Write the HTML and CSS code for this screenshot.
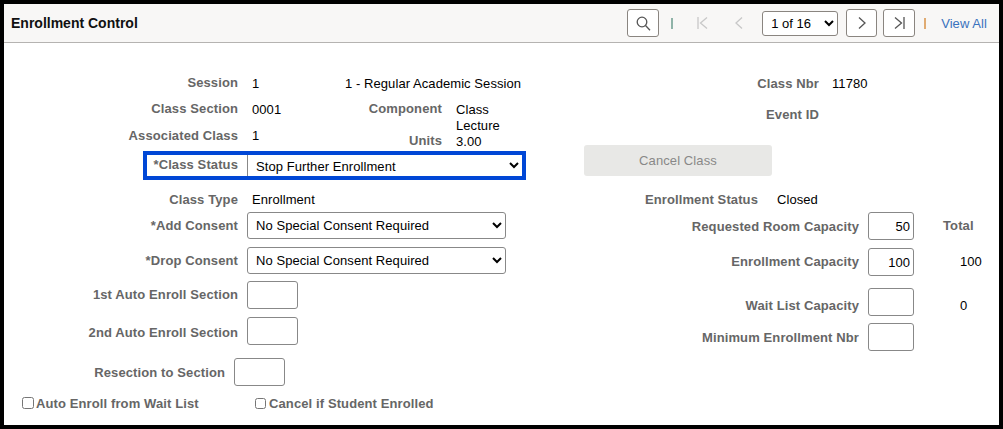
FILE: index.html
```html
<!DOCTYPE html>
<html lang="en">
<head>
<meta charset="utf-8">
<title>Enrollment Control</title>
<link rel="stylesheet" href="styles.css">
</head>
<body>
<div class="frame">
  <header class="bar">
    <h1 class="title">Enrollment Control</h1>
    <nav class="pager">
      <button class="icon-btn search-btn" type="button" aria-label="Search">
        <svg width="15" height="15" viewBox="0 0 15 15" fill="none" stroke="#555" stroke-width="1.3"><circle cx="6" cy="6" r="4.8"/><path d="M9.5 9.5L14 14.2"/></svg>
      </button>
      <span class="sep sep-blue"></span>
      <span class="ghost ghost-first"><svg width="11" height="12" viewBox="0 0 11 12" fill="none" stroke="#c8c8c8" stroke-width="1.3"><path d="M1 0V12M10 .5L3.5 6L10 11.5"/></svg></span>
      <span class="ghost ghost-prev"><svg width="8" height="12" viewBox="0 0 8 12" fill="none" stroke="#c8c8c8" stroke-width="1.3"><path d="M7 .5L1 6L7 11.5"/></svg></span>
      <select class="page-select"><option>1 of 16</option></select>
      <button class="icon-btn next-btn" type="button" aria-label="Next">
        <svg width="8" height="12" viewBox="0 0 8 12" fill="none" stroke="#555" stroke-width="1.3"><path d="M1 .5L7 6L1 11.5"/></svg>
      </button>
      <button class="icon-btn last-btn" type="button" aria-label="Last">
        <svg width="11" height="12" viewBox="0 0 11 12" fill="none" stroke="#555" stroke-width="1.3"><path d="M1 .5L7.5 6L1 11.5M10 0V12"/></svg>
      </button>
      <span class="sep sep-orange"></span>
      <a class="view-all" href="#">View All</a>
    </nav>
  </header>

  <main class="form">
    <section class="col-left">
      <div class="row row-session">
        <span class="label label-main up">Session</span>
        <span class="value value-first">1</span>
        <span class="value value-session">1 - Regular Academic Session</span>
      </div>

      <div class="section-block">
        <div class="section-left">
          <div class="row row-16">
            <span class="label label-main up">Class Section</span>
            <span class="value value-first">0001</span>
          </div>
          <div class="row row-16 row-assoc">
            <span class="label label-main">Associated Class</span>
            <span class="value value-first">1</span>
          </div>
        </div>
        <div class="section-mid">
          <div class="row row-16">
            <span class="label label-mid up">Component</span>
            <span class="value value-mid">Class</span>
          </div>
          <div class="row row-16">
            <span class="label label-mid"></span>
            <span class="value value-mid">Lecture</span>
          </div>
          <div class="row row-16">
            <span class="label label-mid up">Units</span>
            <span class="value value-mid">3.00</span>
          </div>
        </div>
      </div>

      <div class="status-box">
        <span class="label label-status up">*Class Status</span>
        <select class="status-select"><option>Stop Further Enrollment</option></select>
      </div>

      <div class="row row-type">
        <span class="label label-main">Class Type</span>
        <span class="value value-first">Enrollment</span>
      </div>
      <div class="row row-add">
        <span class="label label-main">*Add Consent</span>
        <select class="consent"><option>No Special Consent Required</option></select>
      </div>
      <div class="row row-drop">
        <span class="label label-main">*Drop Consent</span>
        <select class="consent"><option>No Special Consent Required</option></select>
      </div>
      <div class="row row-auto1">
        <span class="label label-main up">1st Auto Enroll Section</span>
        <input class="field field-section" type="text">
      </div>
      <div class="row row-auto2">
        <span class="label label-main down">2nd Auto Enroll Section</span>
        <input class="field field-section" type="text">
      </div>
      <div class="row row-resection">
        <span class="label label-resection">Resection to Section</span>
        <input class="field field-section" type="text">
      </div>
      <div class="row row-checks">
        <label class="check check-first"><input type="checkbox">Auto Enroll from Wait List</label>
        <label class="check check-second"><input type="checkbox">Cancel if Student Enrolled</label>
      </div>
    </section>

    <section class="col-right">
      <div class="row row-nbr">
        <span class="label label-nbr">Class Nbr</span>
        <span class="value value-nbr">11780</span>
      </div>
      <div class="row row-event">
        <span class="label label-event">Event ID</span>
      </div>
      <button class="cancel" type="button">Cancel Class</button>
      <div class="row row-enrl">
        <span class="label label-enrl">Enrollment Status</span>
        <span class="value value-enrl">Closed</span>
      </div>
      <div class="row row-cap row-req">
        <span class="label label-cap">Requested Room Capacity</span>
        <input class="field field-cap" type="text" value="50">
        <span class="label total up">Total</span>
      </div>
      <div class="row row-cap row-cap-enrl">
        <span class="label label-cap up">Enrollment Capacity</span>
        <input class="field field-cap" type="text" value="100">
        <span class="value total-value up">100</span>
      </div>
      <div class="row row-cap row-wait">
        <span class="label label-cap low">Wait List Capacity</span>
        <input class="field field-cap" type="text">
        <span class="value total-value low">0</span>
      </div>
      <div class="row row-cap row-min">
        <span class="label label-cap">Minimum Enrollment Nbr</span>
        <input class="field field-cap" type="text">
      </div>
    </section>
  </main>
</div>
</body>
</html>
```

FILE: styles.css
```css
* { box-sizing: border-box; }

html, body { margin: 0; padding: 0; }

body {
  width: 1003px;
  height: 429px;
  overflow: hidden;
  background: #000;
  font-family: "Liberation Sans", Arial, sans-serif;
  font-size: 13px;
  letter-spacing: .07px;
  color: #000;
}

.frame {
  width: 995px;
  height: 421px;
  margin: 4px;
  background: #fff;
  overflow: hidden;
}

/* header bar */
.bar {
  display: flex;
  align-items: center;
  justify-content: space-between;
  height: 39px;
  background: #f8f7f6;
  border-bottom: 1px solid #b5b3b1;
}

.title {
  margin: 0 0 0 7px;
  font-size: 14px;
  font-weight: bold;
  letter-spacing: 0;
  color: #111;
}

.pager {
  display: flex;
  align-items: center;
  height: 38px;
}

.icon-btn {
  display: flex;
  align-items: center;
  justify-content: center;
  height: 28px;
  padding: 0;
  background: #fff;
  border: 1px solid #8a8580;
  border-radius: 3px;
}

.search-btn { width: 32px; }
.next-btn { width: 31px; margin-left: 8px; }
.last-btn { width: 32px; margin-left: 6px; }

.sep { width: 2px; height: 11px; }
.sep-blue { margin-left: 12px; background: #8fb3a8; }
.sep-orange { margin-left: 9px; background: #e0ab72; }

.ghost { display: flex; align-items: center; }
.ghost-first { margin-left: 24px; }
.ghost-prev { margin-left: 27px; }

.page-select {
  width: 76px;
  height: 25px;
  margin-left: 19px;
  padding-left: 4px;
  font: 13px "Liberation Sans", Arial, sans-serif;
  background: #fff;
  border: 1px solid #8a8580;
  border-radius: 3px;
}

.view-all {
  margin: 0 12px 0 15px;
  color: #3a72bd;
  font-size: 13px;
  text-decoration: none;
}

/* form */
.form { display: flex; }

.col-left { width: 580px; padding-top: 30px; }
.col-right { width: 415px; padding-top: 30px; }

.row { display: flex; align-items: center; height: 20px; }
.row-16 { height: 16px; }

.label {
  flex: none;
  text-align: right;
  font-weight: bold;
  letter-spacing: .11px;
  color: #666;
}

.value { flex: none; color: #000; }

/* optical offsets of a label against its field */
.up { padding-bottom: 2px; }
.down { padding-top: 2px; }
.low { padding-top: 6px; }

.label-main { width: 234px; margin-right: 9px; }
.value-first { width: 98px; padding-left: 5px; }

.section-block { display: flex; margin-top: 8px; height: 48px; }
.section-left { width: 341px; }
.row-assoc { margin-top: 10px; }
.section-mid { flex: none; }
.label-mid { width: 97px; }
.value-mid { margin-left: 14px; }

.status-box {
  display: flex;
  align-items: center;
  width: 383px;
  height: 29px;
  margin: 2px 0 0 139px;
  border: 4px solid #0047d6;
}

.label-status { width: 91px; margin-right: 9px; }

.status-select {
  width: 275px;
  height: 21px;
  padding: 2px 0 0 4px;
  font: 13px "Liberation Sans", Arial, sans-serif;
  letter-spacing: .07px;
  background: #fff;
  border: 0;
  border-left: 1px solid #888;
  border-radius: 0;
}

.row-type { margin-top: 9px; }

.consent {
  width: 259px;
  height: 27px;
  padding-left: 4px;
  font: 13px "Liberation Sans", Arial, sans-serif;
  letter-spacing: .07px;
  background: #fff;
  border: 1px solid #888;
  border-radius: 3px;
}

.row-add { height: 27px; margin-top: 3px; }
.row-drop { height: 27px; margin-top: 8px; }
.row-auto1 { height: 28px; margin-top: 7px; }
.row-auto2 { height: 28px; margin-top: 8px; }
.row-resection { height: 28px; margin-top: 13px; }

.label-resection { width: 221px; margin-right: 9px; }

.field {
  height: 28px;
  padding: 0 3px;
  font: 13px "Liberation Sans", Arial, sans-serif;
  background: #fff;
  border: 1px solid #888;
  border-radius: 3px;
}

.field-section { width: 51px; }
.field-cap { width: 46px; text-align: right; }

.row-checks { margin-top: 7px; padding-left: 18px; }

.check {
  display: flex;
  align-items: center;
  font-weight: bold;
  letter-spacing: .11px;
  color: #666;
}

.check-first { width: 233px; }

.check input { margin: 0; }
.check-first input { width: 12px; height: 12px; margin-right: 2px; }
.check-second input { width: 11px; height: 11px; margin-right: 3px; }

/* right column */
.label-nbr { width: 235px; margin-right: 13px; }
.row-event { margin-top: 11px; }
.label-event { width: 235px; }

.cancel {
  display: block;
  width: 188px;
  height: 31px;
  margin-top: 21px;
  padding: 0;
  font: 13px "Liberation Sans", Arial, sans-serif;
  letter-spacing: .1px;
  color: #888;
  background: #e8e8e6;
  border: 0;
  border-radius: 3px;
}

.row-enrl { margin-top: 13px; }
.label-enrl { width: 174px; margin-right: 19px; }

.row-cap { height: 28px; }
.row-req { margin-top: 3px; }
.row-cap-enrl { margin-top: 8px; }
.row-wait { margin-top: 12px; }
.row-min { margin-top: 7px; }

.label-cap { width: 275px; margin-right: 9px; }
.total { margin-left: 29px; }
.total-value { margin-left: 46px; }
```
